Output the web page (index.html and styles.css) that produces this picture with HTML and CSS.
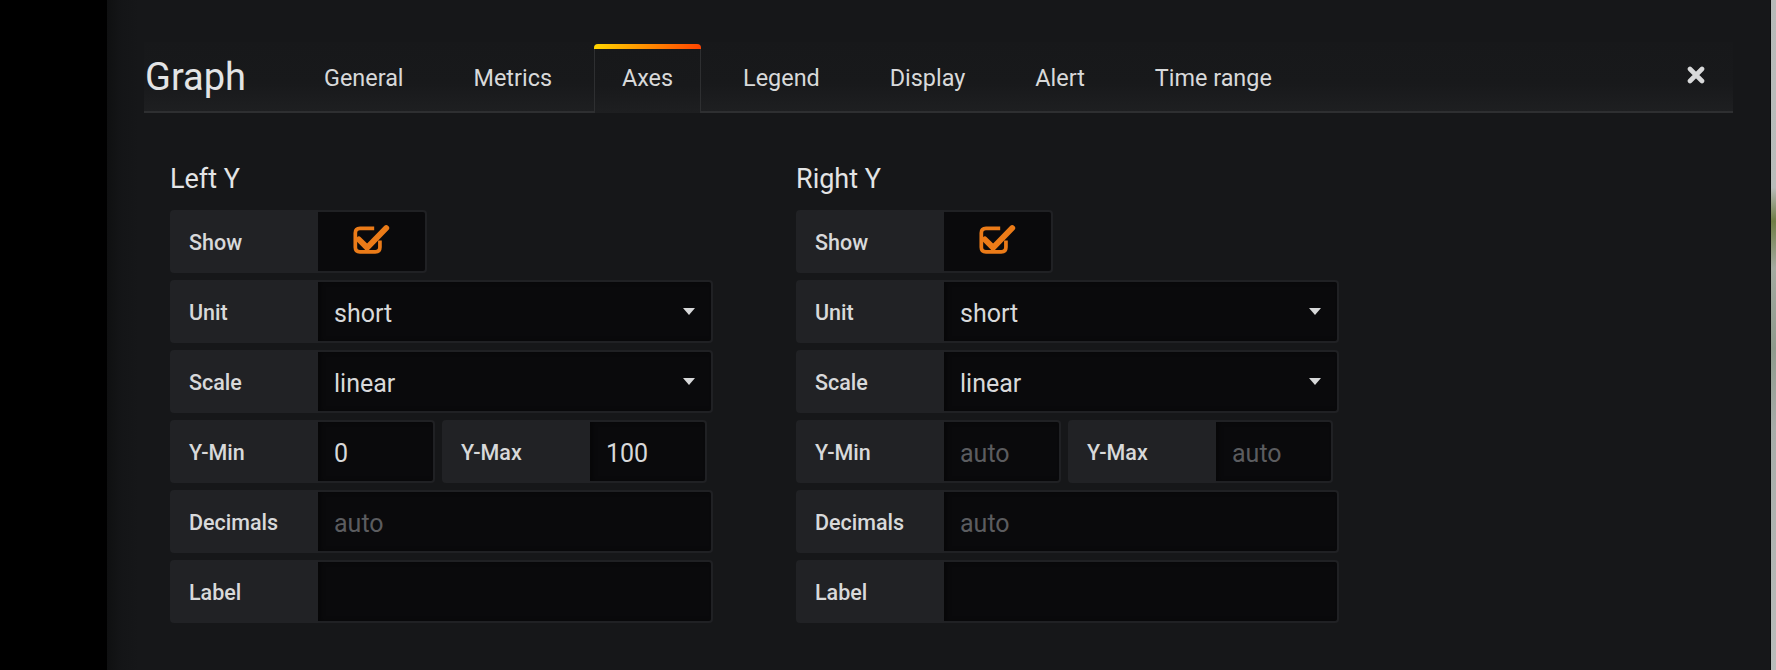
FILE: index.html
```html
<!DOCTYPE html>
<html lang="en">
<head>
<meta charset="utf-8">
<title>Graph - Axes</title>
<link rel="stylesheet" href="styles.css">
</head>
<body>
<div class="app">
  <aside class="sidemenu"></aside>
  <main class="editor">
    <header class="edit-header">
      <h2 class="edit-title">Graph</h2>
      <ul class="tabs">
        <li class="tab">General</li>
        <li class="tab">Metrics</li>
        <li class="tab tab-active">Axes</li>
        <li class="tab">Legend</li>
        <li class="tab">Display</li>
        <li class="tab">Alert</li>
        <li class="tab">Time range</li>
      </ul>
      <button class="close" aria-label="Close">
        <svg viewBox="0 0 18 18" width="18" height="18"><path d="M3 3 L15 15 M15 3 L3 15" stroke="#d8d9da" stroke-width="4.6" stroke-linecap="round"/></svg>
      </button>
    </header>

    <section class="edit-body">
      <div class="axis-col">
        <h5 class="section-heading">Left Y</h5>
        <div class="form-stack">
          <div class="field field-short">
            <label class="field-label">Show</label>
            <div class="field-check">
              <svg class="check-icon" viewBox="0 0 40 32" width="44" height="35"><path d="M22 5.75 H9 Q4.75 5.75 4.75 10 V23 Q4.75 27.25 9 27.25 H23 Q27.25 27.25 27.25 23 V17" fill="none" stroke="#eb7b18" stroke-width="3.4"/><path d="M8 16 L15.5 23.5 L33 5.5" fill="none" stroke="#eb7b18" stroke-width="5.4" stroke-linecap="round" stroke-linejoin="round"/></svg>
            </div>
          </div>
          <div class="field">
            <label class="field-label">Unit</label>
            <div class="field-input field-select"><span>short</span><i class="caret"></i></div>
          </div>
          <div class="field">
            <label class="field-label">Scale</label>
            <div class="field-input field-select"><span>linear</span><i class="caret"></i></div>
          </div>
          <div class="field-pair">
            <div class="field field-half">
              <label class="field-label">Y-Min</label>
              <div class="field-input"><span>0</span></div>
            </div>
            <div class="field field-half">
              <label class="field-label">Y-Max</label>
              <div class="field-input"><span>100</span></div>
            </div>
          </div>
          <div class="field">
            <label class="field-label">Decimals</label>
            <div class="field-input"><span class="placeholder">auto</span></div>
          </div>
          <div class="field">
            <label class="field-label">Label</label>
            <div class="field-input"></div>
          </div>
        </div>
      </div>

      <div class="axis-col">
        <h5 class="section-heading">Right Y</h5>
        <div class="form-stack">
          <div class="field field-short">
            <label class="field-label">Show</label>
            <div class="field-check">
              <svg class="check-icon" viewBox="0 0 40 32" width="44" height="35"><path d="M22 5.75 H9 Q4.75 5.75 4.75 10 V23 Q4.75 27.25 9 27.25 H23 Q27.25 27.25 27.25 23 V17" fill="none" stroke="#eb7b18" stroke-width="3.4"/><path d="M8 16 L15.5 23.5 L33 5.5" fill="none" stroke="#eb7b18" stroke-width="5.4" stroke-linecap="round" stroke-linejoin="round"/></svg>
            </div>
          </div>
          <div class="field">
            <label class="field-label">Unit</label>
            <div class="field-input field-select"><span>short</span><i class="caret"></i></div>
          </div>
          <div class="field">
            <label class="field-label">Scale</label>
            <div class="field-input field-select"><span>linear</span><i class="caret"></i></div>
          </div>
          <div class="field-pair">
            <div class="field field-half">
              <label class="field-label">Y-Min</label>
              <div class="field-input"><span class="placeholder">auto</span></div>
            </div>
            <div class="field field-half">
              <label class="field-label">Y-Max</label>
              <div class="field-input"><span class="placeholder">auto</span></div>
            </div>
          </div>
          <div class="field">
            <label class="field-label">Decimals</label>
            <div class="field-input"><span class="placeholder">auto</span></div>
          </div>
          <div class="field">
            <label class="field-label">Label</label>
            <div class="field-input"></div>
          </div>
        </div>
      </div>
    </section>
  </main>
  <div class="edge"></div>
</div>
</body>
</html>
```

FILE: styles.css
```css
* { box-sizing: border-box; }

html, body {
  margin: 0;
  padding: 0;
  width: 1776px;
  height: 670px;
  overflow: hidden;
  background: #161719;
  font-family: Roboto, "Liberation Sans", sans-serif;
  color: #d8d9da;
}

.app {
  display: flex;
  height: 670px;
}

.sidemenu {
  width: 107px;
  flex: 0 0 107px;
  background: #000;
}

.editor {
  flex: 1;
  padding: 42px 37px 0 37px;
  background: linear-gradient(to right, #0f1011 0, #141517 14px, #161719 32px);
}

.edge {
  width: 6px;
  flex: 0 0 6px;
  border-left: 1px solid #0c0d0d;
  background: linear-gradient(to bottom, #b6bab8 0, #b8bcba 28%, #6f7d45 33%, #a3aaa0 40%, #8e9a8c 52%, #a6aca8 64%, #b9bdbb 100%);
}

/* header */
.edit-header {
  display: flex;
  align-items: flex-start;
  height: 71px;
  padding-left: 1px;
  border-bottom: 2px solid #2e2f31;
  background: linear-gradient(to bottom, #17181a 0, #18191b 60%, #1e1f21 100%);
}

.edit-title {
  margin: 0;
  width: 151px;
  padding-top: 13px;
  font-size: 38px;
  line-height: 45px;
  font-weight: 400;
  color: #e3e4e5;
}

.tabs {
  display: flex;
  gap: 14px;
  list-style: none;
  margin: 2px 0 0 0;
  padding: 0;
}

.tab {
  position: relative;
  height: 69px;
  margin-bottom: -2px;
  padding: 19px 27px 0;
  font-size: 23.4px;
  line-height: 28px;
  color: #d8d9da;
  border: 1px solid transparent;
  border-bottom: none;
}

.tab-active {
  border-color: #2e2f31;
  border-radius: 4px 4px 0 0;
  background: linear-gradient(to bottom, #17181a 0, #18191b 60%, #1e1f21 100%);
  z-index: 1;
}

.tab-active::before {
  content: "";
  position: absolute;
  left: -1px;
  right: -1px;
  top: -1px;
  height: 5px;
  border-radius: 4px 4px 0 0;
  background: linear-gradient(to right, #ffd500 0%, #ff4400 100%);
}

.close {
  margin: 24px 28px 0 auto;
  padding: 0;
  border: 0;
  background: none;
  width: 18px;
  height: 18px;
  display: flex;
}

/* body */
.edit-body {
  display: flex;
  gap: 83px;
  padding: 50px 0 0 26px;
}

.axis-col {
  width: 543px;
}

.section-heading {
  margin: 0 0 15px;
  font-size: 27px;
  line-height: 32px;
  font-weight: 400;
  color: #e3e4e5;
}

.form-stack {
  display: flex;
  flex-direction: column;
  gap: 7px;
}

.field {
  display: flex;
  height: 63px;
  width: 543px;
}

.field-short { width: 257px; }

.field-pair {
  display: flex;
  gap: 7px;
}

.field-half { width: 265px; }

.field-label {
  flex: 0 0 148px;
  display: flex;
  align-items: center;
  padding-left: 19px;
  padding-top: 1px;
  background: #212225;
  border-radius: 4px 0 0 4px;
  font-size: 21.5px;
  font-weight: 500;
  color: #d8d9da;
}

.field-input {
  flex: 1;
  display: flex;
  align-items: center;
  padding: 3px 16px 0 16px;
  background: #0a0a0c;
  border: 2px solid #202124;
  border-left: none;
  border-radius: 0 4px 4px 0;
  box-shadow: inset 3px 0 4px rgba(0, 0, 0, 0.35);
  font-size: 25px;
  color: #d8d9da;
}

.field-select {
  justify-content: space-between;
}

.field-select .caret {
  margin-top: -3px;
}

.placeholder {
  color: #5b5c5f;
}

.caret {
  width: 0;
  height: 0;
  border-left: 6px solid transparent;
  border-right: 6px solid transparent;
  border-top: 7px solid #d8d9da;
}

.field-check {
  flex: 1;
  display: flex;
  align-items: center;
  justify-content: center;
  background: #0a0a0c;
  border: 2px solid #202124;
  border-left: none;
  border-radius: 0 4px 4px 0;
}

.check-icon {
  margin-top: -4px;
  margin-left: 0;
}
```
